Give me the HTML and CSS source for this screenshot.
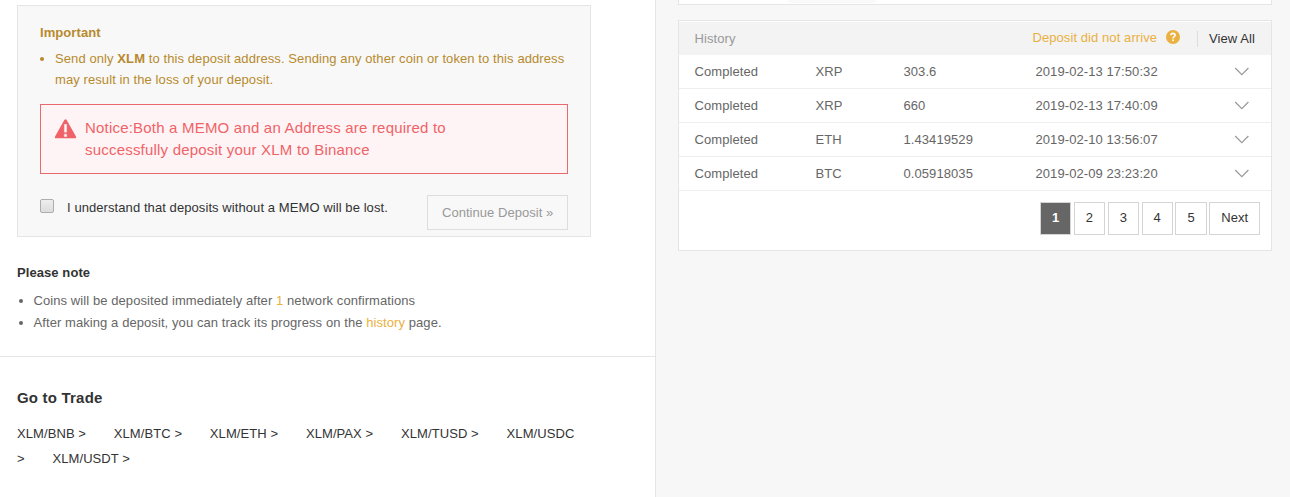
FILE: index.html
```
<!DOCTYPE html>
<html lang="en">
<head>
    <meta charset="UTF-8">
    <title>Deposit</title>
    <link rel="stylesheet" href="styles.css">
</head>
<body>
<div id="wrap">
    <div class="left">
        <div class="important">
            <h4>Important</h4>
            <ul class="tips">
                <li>Send only <b>XLM</b> to this deposit address. Sending any other coin or token to this address may result in the loss of your deposit.</li>
            </ul>
            <div class="notice">
                <svg width="22" height="20" viewBox="0 0 22 20">
                    <path d="M9.3 1Q10.5-.6 11.7 1L21 17.6V19.2H0V17.6z" fill="#ef6368"/>
                    <path d="M8.9 5H12.1V13.6H8.9zM8.9 14.8H12.1V18H8.9z" fill="#f9b9bc"/>
                    <path d="M9.7 5.5H11.3V13H9.7zM9.7 15.4H11.3V17.2H9.7z" fill="#fff"/>
                </svg>
                <p>Notice:Both a MEMO and an Address are required to successfully deposit your XLM to Binance</p>
            </div>
            <div class="confirm">
                <label><span class="check"></span>I understand that deposits without a MEMO will be lost.</label>
                <a class="btn">Continue Deposit »</a>
            </div>
        </div>
        <div class="note">
            <h4>Please note</h4>
            <ul>
                <li>Coins will be deposited immediately after <span class="gold">1</span> network confirmations</li>
                <li>After making a deposit, you can track its progress on the <a class="gold">history</a> page.</li>
            </ul>
        </div>
        <div class="trade">
            <h3>Go to Trade</h3>
            <p>
                <a>XLM/BNB &gt;</a><a>XLM/BTC &gt;</a><a>XLM/ETH &gt;</a><a>XLM/PAX &gt;</a><a>XLM/TUSD &gt;</a><a>XLM/USDC &gt;</a><a>XLM/USDT &gt;</a>
            </p>
        </div>
    </div>
    <div class="right">
        <div class="prev"><span></span></div>
        <div class="history">
            <div class="head">
                <span class="title">History</span>
                <a class="gold">Deposit did not arrive</a>
                <svg width="14" height="14" viewBox="0 0 14 14">
                    <circle cx="7" cy="7" r="7" fill="#eab040"/>
                    <path d="M4.9 5.3Q5 3.4 7 3.4T9.1 5.2C9.1 6.6 7 6.7 7 8.4" fill="none" stroke="#fff" stroke-width="1.6"/>
                    <rect x="6.2" y="9.5" width="1.7" height="1.6" fill="#fff"/>
                </svg>
                <a class="all">View All</a>
            </div>
            <div class="row">
                <span>Completed</span><span>XRP</span><span>303.6</span><span>2019-02-13 17:50:32</span>
                <svg width="16" height="9" viewBox="0 0 16 9"><path d="M1.2 1L7.8 7.6L14.4 1"/></svg>
            </div>
            <div class="row">
                <span>Completed</span><span>XRP</span><span>660</span><span>2019-02-13 17:40:09</span>
                <svg width="16" height="9" viewBox="0 0 16 9"><path d="M1.2 1L7.8 7.6L14.4 1"/></svg>
            </div>
            <div class="row">
                <span>Completed</span><span>ETH</span><span>1.43419529</span><span>2019-02-10 13:56:07</span>
                <svg width="16" height="9" viewBox="0 0 16 9"><path d="M1.2 1L7.8 7.6L14.4 1"/></svg>
            </div>
            <div class="row">
                <span>Completed</span><span>BTC</span><span>0.05918035</span><span>2019-02-09 23:23:20</span>
                <svg width="16" height="9" viewBox="0 0 16 9"><path d="M1.2 1L7.8 7.6L14.4 1"/></svg>
            </div>
            <div class="pages">
                <a class="on">1</a><a>2</a><a>3</a><a>4</a><a>5</a><a>Next</a>
            </div>
        </div>
    </div>
</div>
</body>
</html>
```
FILE: styles.css
```
*{
    margin: 0;
    padding: 0;
    box-sizing: border-box;
}
body{
    font: 13px/22px Arial, "Liberation Sans", sans-serif;
    letter-spacing: .08px;
    color: #666;
    background: #f7f7f7;
}
#wrap{
    display: flex;
    height: 497px;
    overflow: hidden;
}
.left{
    width: 656px;
    background: #fff;
    border-right: 1px solid #e5e5e5;
    padding-top: 5px;
}
h3, h4{
    font-weight: bold;
    color: #333;
}
h4{
    font-size: 13px;
}
.gold{
    color: #eab040;
}
.important{
    width: 574px;
    height: 232px;
    margin-left: 17px;
    padding: 16px 22px 0;
    border: 1px solid #e5e5e5;
    background: #f8f8f8;
    color: #b78a2d;
}
.important h4{
    color: #b78a2d;
}
.tips{
    padding-left: 15px;
    margin-top: 4px;
    line-height: 21px;
    letter-spacing: .09px;
}
.notice{
    display: flex;
    height: 70px;
    margin-top: 14px;
    padding: 12px 14px;
    border: 1px solid #e96a6e;
    background: #fff4f5;
    color: #ef6368;
    font-size: 15px;
    letter-spacing: .2px;
}
.notice svg{
    margin: 2px 8px 0 0;
}
.notice p{
    width: 400px;
}
.confirm{
    display: flex;
    justify-content: space-between;
    margin-top: 21px;
    color: #333;
}
.confirm label{
    display: flex;
    padding-top: 2px;
}
.check{
    width: 14px;
    height: 14px;
    margin: 2px 13px 0 0;
    border: 1px solid #adadad;
    border-radius: 2px;
    background: linear-gradient(#eee, #dcdcdc);
}
.btn{
    width: 141px;
    height: 35px;
    padding-left: 14px;
    line-height: 33px;
    border: 1px solid #ddd;
    color: #999;
    letter-spacing: .04px;
}
.note{
    height: 120px;
    padding: 25px 17px 0;
    border-bottom: 1px solid #e5e5e5;
}
.note ul{
    margin-top: 6px;
    padding-left: 16.5px;
}
.trade{
    padding: 30px 17px 0;
    color: #333;
}
.trade h3{
    font-size: 15px;
    letter-spacing: .2px;
}
.trade p{
    width: 574px;
    margin-top: 12px;
    line-height: 25px;
}
.trade a{
    margin-right: 27.8px;
}
.right{
    flex: 1;
    padding-left: 22px;
}
.prev{
    width: 594px;
    height: 5px;
    padding-left: 109px;
    background: #fff;
    border: 1px solid #e5e5e5;
    border-top: 0;
}
.prev span{
    display: block;
    width: 88px;
    height: 3px;
    background: #f9f9f9;
    border-radius: 0 0 3px 3px;
}
.history{
    width: 594px;
    height: 231px;
    margin-top: 15px;
    padding-top: 1px;
    background: #fff;
    border: 1px solid #e5e5e5;
}
.head{
    display: flex;
    align-items: center;
    height: 33px;
    padding: 0 16px 0 15.5px;
    background: #f3f3f3;
}
.head .title{
    flex: 1;
    color: #999;
}
.head .gold{
    margin-top: -2px;
}
.head svg{
    margin: -3px 17px 0 9px;
}
.head .all{
    height: 16px;
    padding-left: 11px;
    line-height: 16px;
    border-left: 1px solid #ddd;
    color: #333;
}
.row{
    display: grid;
    grid-template-columns: 121px 88px 132px 198px 1fr;
    align-items: center;
    height: 34px;
    padding-left: 15.5px;
    border-bottom: 1px solid #eee;
}
.row path{
    fill: none;
    stroke: #999;
    stroke-width: 1.2;
}
.pages{
    display: flex;
    justify-content: flex-end;
    gap: 2.65px;
    padding: 11px 11px 0 0;
}
.pages a{
    height: 33px;
    padding: 0 11px;
    line-height: 30px;
    border: 1px solid #d5d5d5;
    color: #333;
    letter-spacing: 0;
}
.pages .on{
    background: #666;
    color: #fff;
    font-weight: bold;
}
```
